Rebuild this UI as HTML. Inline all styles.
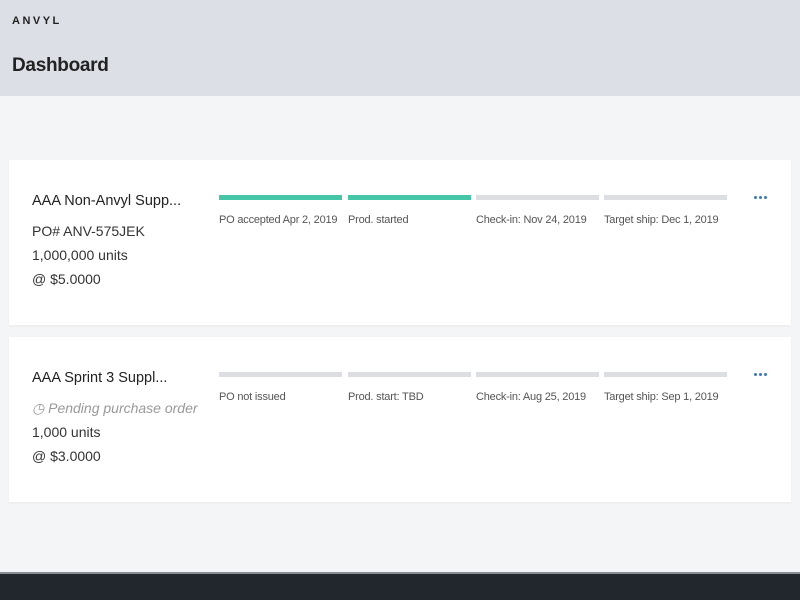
<!DOCTYPE html>
<html><head><style>
*{margin:0;padding:0;box-sizing:border-box}
body{width:800px;height:600px;overflow:hidden;background:#f4f5f7;font-family:"Liberation Sans",sans-serif;position:relative;color:#333}
.hdr{position:absolute;left:0;top:0;width:800px;height:96px;background:#dcdfe6}
.logo{position:absolute;left:12px;top:15px;font-size:11px;font-weight:bold;letter-spacing:2.5px;color:#222}
.title{position:absolute;left:12px;top:55px;font-size:19px;font-weight:bold;color:#222;letter-spacing:-0.3px}
.card{position:absolute;left:9px;width:782px;height:165px;background:#fff;box-shadow:0 1px 2px rgba(0,0,0,.05)}
.t{position:absolute;left:23px;font-size:14px;color:#333;white-space:nowrap}
.h{font-size:14.5px;color:#222}
.bar{position:absolute;top:35px;height:5px;width:123px;background:#dcdee2}
.bar.g{background:#45c6a6}
.lb{position:absolute;top:54px;font-size:11px;color:#555;white-space:nowrap;letter-spacing:-0.2px}
.d{position:absolute;top:36px;width:3px;height:3px;border-radius:50%;background:#3a7ab8}
.foot{position:absolute;left:0;top:572px;width:800px;height:28px;background:#22272e;border-top:2px solid #888d95}
</style></head><body>
<div class="hdr"><div class="logo">ANVYL</div><div class="title">Dashboard</div></div>
<div class="card" style="top:160px">
<div class="t h" style="top:33px">AAA Non-Anvyl Supp...</div>
<div class="t" style="top:63px">PO# ANV-575JEK</div>
<div class="t" style="top:87px">1,000,000 units</div>
<div class="t" style="top:111px">@ $5.0000</div>
<div class="bar g" style="left:210px"></div><div class="bar g" style="left:339px"></div><div class="bar" style="left:467px"></div><div class="bar" style="left:595px"></div>
<div class="lb" style="left:210px">PO accepted Apr 2, 2019</div><div class="lb" style="left:339px">Prod. started</div><div class="lb" style="left:467px">Check-in: Nov 24, 2019</div><div class="lb" style="left:595px">Target ship: Dec 1, 2019</div>
<div class="d" style="left:745px"></div><div class="d" style="left:750px"></div><div class="d" style="left:755px"></div>
</div>
<div class="card" style="top:337px">
<div class="t h" style="top:33px">AAA Sprint 3 Suppl...</div>
<div class="t" style="top:63px;color:#999;font-style:italic">◷ Pending purchase order</div>
<div class="t" style="top:87px">1,000 units</div>
<div class="t" style="top:111px">@ $3.0000</div>
<div class="bar" style="left:210px"></div><div class="bar" style="left:339px"></div><div class="bar" style="left:467px"></div><div class="bar" style="left:595px"></div>
<div class="lb" style="left:210px">PO not issued</div><div class="lb" style="left:339px">Prod. start: TBD</div><div class="lb" style="left:467px">Check-in: Aug 25, 2019</div><div class="lb" style="left:595px">Target ship: Sep 1, 2019</div>
<div class="d" style="left:745px"></div><div class="d" style="left:750px"></div><div class="d" style="left:755px"></div>
</div>
<div class="foot"></div>
</body></html>
